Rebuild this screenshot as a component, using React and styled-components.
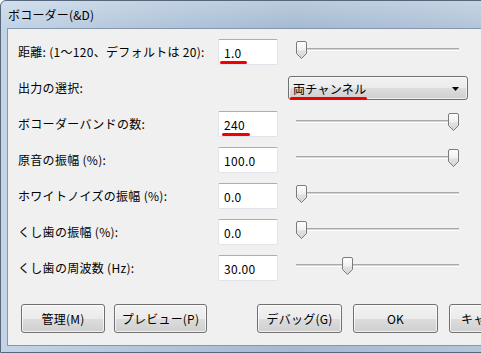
import React from "react";
import styled, { createGlobalStyle } from "styled-components";

const GlobalStyle = createGlobalStyle`
  html, body {
    margin: 0;
    padding: 0;
    overflow: hidden;
    background: #ffffff;
  }
  body {
    font-family: "Noto Sans CJK JP", "Noto Sans", sans-serif;
    font-size: 12px;
    color: #000;
  }
`;

// slider track is 163px, thumb is 11px wide
const TRACK = 163;
const THUMB = 11;

const rows = [
  { label: "距離: (1～120、デフォルトは 20):", value: "1.0", pos: 0, mark: { left: 1, width: 27 } },
  { label: "出力の選択:", select: "両チャンネル" },
  { label: "ボコーダーバンドの数:", value: "240", pos: 1, mark: { left: 3, width: 28 } },
  { label: "原音の振幅 (%):", value: "100.0", pos: 1 },
  { label: "ホワイトノイズの振幅 (%):", value: "0.0", pos: 0 },
  { label: "くし歯の振幅 (%):", value: "0.0", pos: 0 },
  { label: "くし歯の周波数 (Hz):", value: "30.00", pos: 0.3 },
];

const buttons = [
  { text: "管理(M)", width: 84, gap: 0 },
  { text: "プレビュー(P)", width: 93, gap: 9 },
  { text: "デバッグ(G)", width: 85, gap: 50 },
  { text: "OK", width: 85, gap: 11 },
  { text: "キャンセル", width: 85, gap: 11 },
];

export default function App() {
  return (
    <>
      <GlobalStyle />
      <Window>
        <TitleBar>ボコーダー(&amp;D)</TitleBar>
        <Client>
          <Form>
            {rows.map((row) => (
              <React.Fragment key={row.label}>
                <Label>{row.label}</Label>
                {row.select ? (
                  <>
                    <span />
                    <Select>
                      {row.select}
                      <Mark style={{ left: 1, top: 20, width: 77 }} />
                      <Arrow width="7" height="4" viewBox="0 0 7 4">
                        <polygon points="0,0 7,0 3.5,4" fill="#000" />
                      </Arrow>
                    </Select>
                  </>
                ) : (
                  <>
                    <Input>
                      {row.value}
                      {row.mark && (
                        <Mark style={{ left: row.mark.left, top: 21, width: row.mark.width }} />
                      )}
                    </Input>
                    <Slider>
                      <Track />
                      <Thumb
                        style={{ left: Math.round(row.pos * (TRACK - THUMB)) }}
                        width="11"
                        height="18"
                        viewBox="0 0 11 18"
                      >
                        <defs>
                          <linearGradient id="thumbFill" x1="0" y1="0" x2="0" y2="1">
                            <stop offset="0" stopColor="#ffffff" />
                            <stop offset="0.5" stopColor="#f0f0f0" />
                            <stop offset="0.55" stopColor="#e2e2e2" />
                            <stop offset="1" stopColor="#d4d4d4" />
                          </linearGradient>
                        </defs>
                        <path
                          d="M2 0.5 H9 Q10.5 0.5 10.5 2 V12.5 L5.5 17.5 L0.5 12.5 V2 Q0.5 0.5 2 0.5 Z"
                          fill="url(#thumbFill)"
                          stroke="#7b7b7b"
                        />
                      </Thumb>
                    </Slider>
                  </>
                )}
              </React.Fragment>
            ))}
          </Form>
          <ButtonRow>
            {buttons.map((b) => (
              <Button key={b.text} $width={b.width} $gap={b.gap}>
                {b.text}
              </Button>
            ))}
          </ButtonRow>
        </Client>
      </Window>
    </>
  );
}

// Styled Components

const Window = styled.div`
  width: 540px;
  height: 353px;
  box-sizing: border-box;
  border: 1px solid #56677b;
  border-radius: 6px 6px 0 0;
  background: linear-gradient(90deg, #c3d4e7 0%, #b0c4da 30%, #a5bad2 55%, #afc2d8 80%, #b9cadc 100%);
  display: flex;
  flex-direction: column;
  overflow: hidden;
`;

const TitleBar = styled.div`
  height: 27px;
  flex: none;
  display: flex;
  align-items: center;
  padding-left: 7px;
  padding-bottom: 1px;
  box-sizing: border-box;
  font-size: 12px;
  letter-spacing: 0.2px;
  color: #000;
  background: linear-gradient(180deg, rgba(255, 255, 255, 0.25), rgba(255, 255, 255, 0));
`;

const Client = styled.div`
  margin: 0 0 6px 6px;
  border: 1px solid #8797ab;
  background: #f0f0f0;
  padding: 5px 0 11px 10px;
  flex: 1;
  display: flex;
  flex-direction: column;
`;

const Form = styled.div`
  display: grid;
  grid-template-columns: 200px 60px 1fr;
  grid-auto-rows: 36px;
  align-items: center;
`;

const Label = styled.div`
  font-size: 12px;
  letter-spacing: 0.3px;
  white-space: nowrap;
  padding-bottom: 1px;
`;

const Input = styled.div`
  position: relative;
  height: 26px;
  box-sizing: border-box;
  background: #fff;
  border: 1px solid #e2e3ea;
  border-top-color: #abadb3;
  border-radius: 2px;
  padding-left: 5px;
  display: flex;
  align-items: center;
  font-size: 12px;
  letter-spacing: 0.3px;
`;

const Mark = styled.span`
  position: absolute;
  height: 3px;
  border-radius: 2px;
  background: #f00000;
`;

const Slider = styled.div`
  position: relative;
  width: ${TRACK}px;
  height: 18px;
  margin-left: 18px;
  margin-bottom: 4px;
`;

const Track = styled.div`
  position: absolute;
  left: 0;
  right: 0;
  top: 7px;
  height: 1px;
  background: #d6d6d6;
  border-top: 1px solid #a9a9a9;
  border-bottom: 1px solid #ffffff;
`;

const Thumb = styled.svg`
  position: absolute;
  top: 0;
  display: block;
`;

const Select = styled.div`
  position: relative;
  width: 180px;
  height: 24px;
  margin-left: 10px;
  box-sizing: border-box;
  border: 1px solid #707070;
  border-radius: 3px;
  background: linear-gradient(180deg, #f2f2f2 0%, #ebebeb 50%, #dddddd 51%, #cfcfcf 100%);
  box-shadow: inset 0 0 0 1px rgba(255, 255, 255, 0.6);
  padding-left: 4px;
  display: flex;
  align-items: center;
  font-size: 12px;
  letter-spacing: 0.3px;
`;

const Arrow = styled.svg`
  position: absolute;
  right: 8px;
  top: 10px;
`;

const ButtonRow = styled.div`
  display: flex;
  margin-top: 18px;
  padding-left: 3px;
`;

const Button = styled.div`
  flex: none;
  width: ${(p) => p.$width}px;
  height: 29px;
  margin-left: ${(p) => p.$gap}px;
  box-sizing: border-box;
  border: 1px solid #707070;
  border-radius: 3px;
  background: linear-gradient(180deg, #f2f2f2 0%, #ebebeb 50%, #dddddd 51%, #cfcfcf 100%);
  box-shadow: inset 0 0 0 1px rgba(255, 255, 255, 0.7);
  display: flex;
  align-items: center;
  justify-content: center;
  font-size: 12px;
  letter-spacing: 0.2px;
  white-space: nowrap;
`;
